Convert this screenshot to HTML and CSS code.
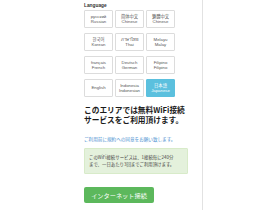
FILE: index.html
```html
<!DOCTYPE html>
<html lang="ja">
<head>
<meta charset="utf-8">
<link rel="stylesheet" href="styles.css">
</head>
<body>
<div class="card">
  <div class="label">Language</div>
  <div class="langs">
    <div class="tile"><span>русский</span><span>Russian</span></div>
    <div class="tile"><span>简体中文</span><span>Chinese</span></div>
    <div class="tile"><span>繁體中文</span><span>Chinese</span></div>
    <div class="tile"><span>한국어</span><span>Korean</span></div>
    <div class="tile"><span>ภาษาไทย</span><span>Thai</span></div>
    <div class="tile"><span>Melayu</span><span>Malay</span></div>
    <div class="tile"><span>français</span><span>French</span></div>
    <div class="tile"><span>Deutsch</span><span>German</span></div>
    <div class="tile"><span>Filipino</span><span>Filipino</span></div>
    <div class="tile"><span>English</span></div>
    <div class="tile"><span>Indonesia</span><span>Indonesian</span></div>
    <div class="tile active"><span>日本語</span><span>Japanese</span></div>
  </div>
  <h1 class="title">このエリアでは無料WiFi接続<br>サービスをご利用頂けます。</h1>
  <p class="note">ご利用前に規約への同意をお願い致します。</p>
  <div class="info">このWiFi接続サービスは、1接続毎に240分<br>まで、一日あたり3回までご利用頂けます。</div>
  <button class="connect">インターネット接続</button>
</div>
</body>
</html>
```
FILE: styles.css
```css
html, body {
  margin: 0;
  padding: 0;
  background: #ffffff;
  height: 100%;
}
body {
  font-family: "Liberation Sans", "Noto Sans CJK JP", sans-serif;
  color: #222;
}
.card {
  box-sizing: border-box;
  margin-left: 70px;
  width: 133px;
  min-height: 210px;
  border-right: 1px solid #e2e2e2;
  padding: 3px 0 0 14px;
}
.label {
  font-size: 4.8px;
  font-weight: bold;
  line-height: 6px;
  height: 7px;
  color: #333;
}
.langs {
  display: grid;
  grid-template-columns: repeat(3, 29px);
  grid-auto-rows: 18px;
  column-gap: 2px;
  row-gap: 5px;
}
.tile {
  box-sizing: border-box;
  border: 1px solid #dcdcdc;
  border-radius: 1px;
  display: flex;
  flex-direction: column;
  align-items: center;
  justify-content: center;
  font-size: 4.3px;
  line-height: 5.5px;
  color: #555;
  font-family: "Liberation Sans", "Noto Sans CJK JP", "Noto Sans CJK KR", "Noto Sans CJK SC", "DejaVu Sans", sans-serif;
}
.tile.active {
  background: #5bc0de;
  border-color: #5bc0de;
  color: #fff;
}
.title {
  margin: 8px 0 0 0;
  font-family: "Noto Sans CJK JP", sans-serif;
  font-size: 7.7px;
  line-height: 10px;
  font-weight: bold;
  color: #1a1a1a;
  white-space: nowrap;
}
.note {
  margin: 11px 0 0 0;
  font-family: "Noto Sans CJK JP", sans-serif;
  font-size: 4.6px;
  line-height: 6px;
  color: #4a90d0;
}
.info {
  box-sizing: border-box;
  margin-top: 6px;
  width: 104px;
  height: 26px;
  padding: 5px 4px;
  background: #e4f1dc;
  border: 1px solid #d8ebc9;
  border-radius: 1px;
  font-family: "Noto Sans CJK JP", sans-serif;
  font-size: 4.4px;
  line-height: 7px;
  color: #444;
  white-space: nowrap;
}
.connect {
  display: block;
  margin-top: 13px;
  width: 70px;
  height: 16px;
  padding: 0;
  border: none;
  border-radius: 2px;
  background: #5cb85c;
  color: #fff;
  font-family: "Noto Sans CJK JP", sans-serif;
  font-size: 6.2px;
}
```
